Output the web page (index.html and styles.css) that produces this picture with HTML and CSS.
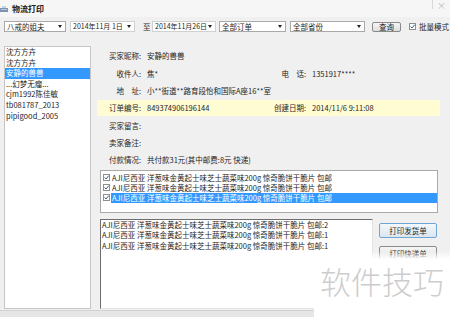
FILE: index.html
```html
<!DOCTYPE html>
<html lang="zh">
<head>
<meta charset="utf-8">
<title>物流打印</title>
<link rel="stylesheet" href="styles.css">
</head>
<body>
<div class="window">
  <div class="titlebar">
    <svg class="ticon" width="9" height="7" viewBox="0 0 9 7"><rect x="0" y="2" width="8" height="4" fill="#7d94b0"/><rect x="2" y="0" width="4" height="2" fill="#c9d3de"/><rect x="1" y="3" width="6" height="1" fill="#b9c8da"/></svg>
    <span class="ttext">物流打印</span>
    <span class="tsep"></span>
    <span class="close">×</span>
  </div>
  <div class="toolbar">
    <div class="combo c1"><span>八戒的姐夫</span><i class="arr"></i></div>
    <div class="combo date d1"><span>2014年11月 1日</span><i class="arr"></i></div>
    <span class="to">至</span>
    <div class="combo date d2"><span>2014年11月26日</span><i class="arr"></i></div>
    <div class="combo c3"><span>全部订单</span><i class="arr"></i></div>
    <div class="combo c4"><span>全部省份</span><i class="arr"></i></div>
    <button class="btn query">查询</button>
    <span class="chk"><svg width="7" height="7" viewBox="0 0 7 7"><path d="M1.5 3.5 L3 5 L5.8 1.6" fill="none" stroke="#3a5a8c" stroke-width="1"/></svg></span>
    <span class="chklabel">批量模式</span>
  </div>
  <div class="main">
    <ul class="buyers">
      <li>沈方方卉</li>
      <li>沈方方卉</li>
      <li class="sel">安静的兽兽</li>
      <li>...幻梦无瘤...</li>
      <li>cjm1992陈佳敏</li>
      <li>tb081787_2013</li>
      <li>pipigood_2005</li>
    </ul>
    <div class="detail">
      <div class="row"><span class="lbl">买家昵称:</span><span class="val">安静的兽兽</span></div>
      <div class="row"><span class="lbl">收件人:</span><span class="val">焦*</span><span class="lbl2">电　话:</span><span class="val2">1351917****</span></div>
      <div class="row"><span class="lbl">地　址:</span><span class="val wide">小**街道**路育段怡和国际A座16**室</span></div>
      <div class="row hl"><span class="lbl">订单编号:</span><span class="val">849374906196144</span><span class="lbl2">创建日期:</span><span class="val2">2014/11/6 9:11:08</span></div>
      <div class="row"><span class="lbl">买家留言:</span></div>
      <div class="row"><span class="lbl">卖家备注:</span></div>
      <div class="row"><span class="lbl">付款情况:</span><span class="val wide">共付款31元(其中邮费:8元 快递)</span></div>
      <div class="items">
        <div class="item"><span class="chk"><svg width="7" height="7" viewBox="0 0 7 7"><path d="M1.5 3.5 L3 5 L5.8 1.6" fill="none" stroke="#3a5a8c" stroke-width="1"/></svg></span><span class="itext">AJI尼西亚 洋葱味金黄起士味芝士蔬菜味200g 惊奇脆饼干脆片 包邮</span></div>
        <div class="item"><span class="chk"><svg width="7" height="7" viewBox="0 0 7 7"><path d="M1.5 3.5 L3 5 L5.8 1.6" fill="none" stroke="#3a5a8c" stroke-width="1"/></svg></span><span class="itext">AJI尼西亚 洋葱味金黄起士味芝士蔬菜味200g 惊奇脆饼干脆片 包邮</span></div>
        <div class="item isel"><span class="chk"><svg width="7" height="7" viewBox="0 0 7 7"><path d="M1.5 3.5 L3 5 L5.8 1.6" fill="none" stroke="#3a5a8c" stroke-width="1"/></svg></span><span class="itext">AJI尼西亚 洋葱味金黄起士味芝士蔬菜味200g 惊奇脆饼干脆片 包邮</span></div>
      </div>
      <div class="bottom">
        <div class="summary">
          <div>AJI尼西亚 洋葱味金黄起士味芝士蔬菜味200g 惊奇脆饼干脆片 包邮:2</div>
          <div>AJI尼西亚 洋葱味金黄起士味芝士蔬菜味200g 惊奇脆饼干脆片 包邮:1</div>
          <div>AJI尼西亚 洋葱味金黄起士味芝士蔬菜味200g 惊奇脆饼干脆片 包邮:1</div>
        </div>
        <div class="actions">
          <button class="btn act focus">打印发货单</button>
          <button class="btn act">打印快递单</button>
        </div>
      </div>
    </div>
  </div>
  <div class="status"></div>
  <div class="watermark">软件技巧</div>
</div>
</body>
</html>
```
FILE: styles.css
```css
* { box-sizing: border-box; }
html, body { margin: 0; padding: 0; }
body {
  width: 450px;
  height: 317px;
  overflow: hidden;
  background: #f0f0f0;
  font: 7.5px/1 "Noto Sans CJK SC", sans-serif;
  color: #1e1e1e;
}
.window { position: relative; width: 450px; height: 317px; }

.titlebar {
  height: 17px;
  display: flex;
  align-items: center;
  background: #f6f6f6;
}
.ticon { margin-left: 0; margin-top: 1px; }
.ttext { margin-left: 3px; font-size: 8px; font-weight: bold; color: #222; }
.tsep { margin-left: auto; width: 1px; height: 9px; background: #d8d8d8; align-self: flex-start; }
.close { width: 17px; text-align: center; color: #b8b8b8; font-size: 9px; align-self: flex-start; margin-top: 1px; }

.toolbar {
  margin-top: 4px;
  height: 11px;
  display: flex;
  align-items: center;
  padding-left: 4px;
}
.combo {
  height: 11px;
  display: flex;
  align-items: center;
  background: #fff;
  border: 1px solid #a9a9a9;
  padding-left: 2px;
  padding-right: 3px;
  white-space: nowrap;
}
.combo span { flex: 1; }
.arr {
  width: 0; height: 0;
  border-left: 2.5px solid transparent;
  border-right: 2.5px solid transparent;
  border-top: 3px solid #222;
}
.c1 { width: 62px; }
.date { border-color: #d0d0d0; font-size: 7px; }
.d1 { width: 65px; margin-left: 4px; }
.to { margin-left: 8px; width: 9px; }
.d2 { width: 64px; margin-left: 0; }
.c3 { width: 67px; margin-left: 3px; }
.c4 { width: 75px; margin-left: 4px; }
.btn {
  font: inherit;
  color: #1e1e1e;
  border: 1px solid #8a8a8a;
  border-radius: 2px;
  background: linear-gradient(#f6f6f6, #dedede);
  padding: 0;
  display: flex;
  align-items: center;
  justify-content: center;
}
.query { width: 29px; height: 10px; margin-left: 7px; }
.chk {
  width: 7px; height: 7px;
  border: 1px solid #8e8f8f;
  background: #fff;
  display: flex;
  flex: none;
}
.chk svg { margin: -1px; }
.toolbar .chk { margin-left: 8px; }
.chklabel { margin-left: 3px; }

.main {
  margin-top: 14px;
  height: 264px;
  display: flex;
}
.buyers {
  list-style: none;
  margin: 0 0 0 4px;
  padding: 0;
  width: 87px;
  height: 263px;
  background: #fff;
  border: 1px solid #c6c6c6;
}
.buyers li {
  height: 10.6px;
  line-height: 10.6px;
  padding-left: 1px;
  white-space: nowrap;
}
.buyers li.sel { background: #3399ff; color: #fff; }

.detail {
  margin-left: 6px;
  width: 343px;
  padding-top: 1.5px;
  display: flex;
  flex-direction: column;
}
.row {
  height: 17.3px;
  display: flex;
  align-items: center;
  white-space: nowrap;
}
.row.hl { background: #fffcd4; height: 15.3px; margin: 1px 0; }
.lbl { width: 44px; text-align: right; flex: none; }
.val { margin-left: 6px; width: 121px; flex: none; }
.val.wide { width: auto; }
.lbl2 { width: 38px; text-align: right; flex: none; }
.val2 { margin-left: 6px; }

.items {
  margin-top: 1.4px;
  margin-left: 3px;
  width: 338px;
  height: 43px;
  background: #fff;
  border: 1px solid #a9a9a9;
  padding-top: 2px;
}
.item {
  height: 10px;
  display: flex;
  align-items: center;
  padding-left: 2px;
  white-space: nowrap;
}
.itext {
  margin-left: 1px;
  padding-left: 1px;
  flex: 1;
  height: 10px;
  line-height: 10px;
}
.isel .itext { background: #3399ff; color: #fff; }

.bottom {
  margin-top: 6px;
  display: flex;
}
.summary {
  margin-left: 3px;
  width: 273px;
  height: 90px;
  background: #fff;
  border: 1px solid;
  border-color: #6d6d6d #e3e3e3 #e3e3e3 #6d6d6d;
  padding: 0 0 0 1px;
  white-space: nowrap;
  overflow: hidden;
}
.summary div { height: 10.5px; line-height: 10.5px; }
.actions {
  margin-left: 6px;
  width: 58px;
  display: flex;
  flex-direction: column;
}
.act { height: 15px; width: 58px; }
.act.focus {
  margin-top: 4px;
  border-color: #6fa6d6;
  background: linear-gradient(#f3f8fc, #dbe6ef);
}
.act + .act { margin-top: 8px; }

.status {
  height: 8px;
  background: #e6e6e6;
  border-top: 1px solid #d2d2d2;
}

.watermark {
  position: absolute;
  left: 314px;
  top: 251px;
  width: 136px;
  height: 66px;
  background: linear-gradient(rgba(255,255,255,0), #fff 8px);
  color: #cdcdcd;
  font-size: 31px;
  font-weight: 300;
  display: flex;
  align-items: center;
  justify-content: center;
  padding-bottom: 8px;
}
```
